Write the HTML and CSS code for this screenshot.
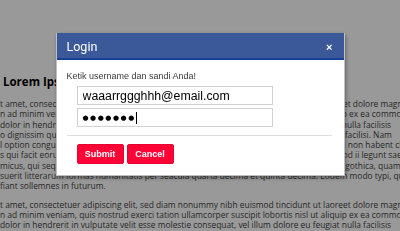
FILE: index.html
```html
<!DOCTYPE html>
<html lang="id">
<head>
  <meta charset="UTF-8">
  <meta name="viewport" content="width=device-width, initial-scale=1.0">
  <title>Login</title>
  <link rel="stylesheet" href="styles.css">
</head>
<body>

<div class="page">
  <h2 class="page-title">Lorem Ipsum Dolor</h2>
  <div class="lines">
    <span>t amet, consectetuer adipiscing elit, sed diam nonummy nibh euismod tincidunt ut laoreet dolore magna</span>
    <span>n ad minim veniam, quis nostrud exerci tation ullamcorper suscipit lobortis nisl ut aliquip ex ea commodo</span>
    <span>dolor in hendrerit in vulputate velit esse molestie consequat, vel illum dolore eu feugiat nulla facilisis</span>
    <span>o dignissim qui blandit praesent luptatum zzril delenit augue duis dolore te feugait nulla facilisi. Nam</span>
    <span>l option congue nihil imperdiet doming id quod mazim placerat facer possim assum. Typi non habent cla</span>
    <span>s qui facit eorum claritatem. Investigationes demonstraverunt lectores legere me lius quod ii legunt saep</span>
    <span>micus, qui sequitur mutationem consuetudium lectorum. Mirum est notare quam littera gothica, quam nunc</span>
    <span>suerit litterarum formas humanitatis per seacula quarta decima et quinta decima. Eodem modo typi, qui</span>
    <span>fiant sollemnes in futurum.</span>
  </div>
  <div class="lines">
    <span>t amet, consectetuer adipiscing elit, sed diam nonummy nibh euismod tincidunt ut laoreet dolore magna</span>
    <span>n ad minim veniam, quis nostrud exerci tation ullamcorper suscipit lobortis nisl ut aliquip ex ea commodo</span>
    <span>dolor in hendrerit in vulputate velit esse molestie consequat, vel illum dolore eu feugiat nulla facilisis</span>
  </div>
</div>

<!-- Login popup -->
<div class="overlay">
  <div class="modal">
    <div class="modal-header">
      <span class="modal-title">Login</span>
      <span class="modal-close">&times;</span>
    </div>
    <div class="modal-body">
      <p class="hint">Ketik username dan sandi Anda!</p>
      <input class="field" type="text" value="waaarrggghhh@email.com">
      <div class="field field-pass">&#9679;&#9679;&#9679;&#9679;&#9679;&#9679;&#9679;<span class="caret"></span></div>
      <hr>
      <div class="actions">
        <button class="btn">Submit</button>
        <button class="btn">Cancel</button>
      </div>
    </div>
  </div>
</div>

</body>
</html>
```

FILE: styles.css
```css
body {
  margin: 0;
  background: #fff;
  font-family: "Open Sans", sans-serif;
  overflow: hidden;
}
.page {
  padding-top: 75px;
  overflow: hidden;
}
.page-title {
  margin: 0 0 10px 3px;
  font-size: 11.5px;
  line-height: 14px;
  font-weight: bold;
  color: #000;
  white-space: nowrap;
}
.lines {
  margin-bottom: 8px;
  font-size: 8.4px;
  line-height: 10.3px;
  color: #444;
}
.lines span {
  display: block;
  white-space: nowrap;
}
.overlay {
  position: fixed;
  top: 0;
  left: 0;
  right: 0;
  bottom: 0;
  background: rgba(0, 0, 0, 0.4);
  display: flex;
  justify-content: center;
  align-items: flex-start;
  padding-top: 33px;
}
.modal {
  width: 289px;
  box-sizing: border-box;
  background: #fff;
  border: 1px solid rgba(0, 0, 0, 0.25);
  border-top: 0;
  box-shadow: 1px 2px 4px rgba(0, 0, 0, 0.35);
}
.modal-header {
  height: 25px;
  padding: 0 11px 0 10px;
  background: #3b5998;
  border-bottom: 2px solid #173f92;
  display: flex;
  justify-content: space-between;
  align-items: center;
  color: #fff;
}
.modal-title {
  font-family: Roboto, sans-serif;
  font-size: 12.5px;
  padding-top: 2px;
}
.modal-close {
  font-family: Arial, "Liberation Sans", sans-serif;
  font-size: 11px;
  font-weight: bold;
  padding-top: 3px;
}
.modal-body {
  padding: 11px 12px 11px 10px;
}
.hint {
  margin: 0 0 4px;
  font-family: "Liberation Sans", Arial, sans-serif;
  font-size: 9px;
  line-height: 11px;
  color: #3a3a3a;
}
.field {
  display: block;
  box-sizing: border-box;
  width: 196px;
  height: 19px;
  margin: 0 0 3px 10px;
  padding: 0 5px;
  border: 1px solid #d2d2d2;
  font-family: "Liberation Sans", Arial, sans-serif;
  font-size: 12.3px;
  color: #000;
  background: #fff;
  outline: none;
}
.field-pass {
  display: flex;
  align-items: center;
  font-family: "DejaVu Sans", sans-serif;
  font-size: 7px;
  letter-spacing: 1.5px;
}
.caret {
  width: 1px;
  height: 12px;
  background: #000;
}
hr {
  border: 0;
  border-top: 1px solid #ddd;
  margin: 8px 0 8px;
}
.actions {
  display: flex;
  gap: 3px;
  padding-left: 10px;
}
.btn {
  width: 47px;
  height: 20px;
  padding: 0;
  border: 1px solid #e8002f;
  border-radius: 2px;
  background: #ff0336;
  color: #fff;
  font-family: "Liberation Sans", Arial, sans-serif;
  font-size: 9px;
  font-weight: bold;
}
```
